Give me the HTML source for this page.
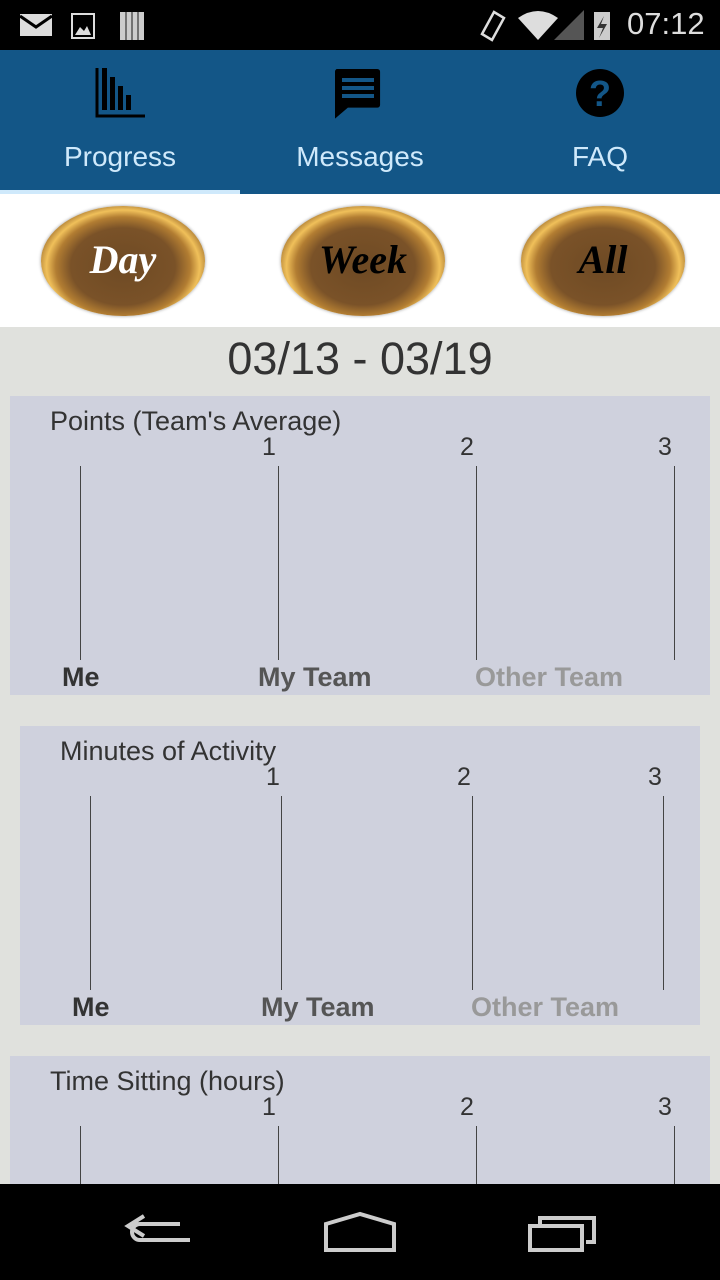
<!DOCTYPE html>
<html><head><style>
body{margin:0;width:720px;height:1280px;overflow:hidden;background:#e0e1dd;font-family:"Liberation Sans",sans-serif;position:relative}
.a{position:absolute}
.sb{left:0;top:0;width:720px;height:50px;background:#000}
.hd{left:0;top:50px;width:720px;height:144px;background:#135687}
.tab{color:#cfe9fb;font-size:28px;width:240px;text-align:center}
.btns{left:0;top:194px;width:720px;height:133px;background:#fff}
.bt{width:164px;height:110px;border-radius:50%;top:206px;background:radial-gradient(ellipse at 50% 55%,#6e4a24 0%,#7a5228 45%,#b27d32 58%,#f0c05a 66%,#8a5a22 78%,#c99040 88%,#5a3a18 100%);box-shadow:0 0 3px #999}
.bt span{position:absolute;left:0;right:0;top:30px;text-align:center;font-family:"Liberation Serif",serif;font-style:italic;font-weight:bold;font-size:40px}
.pn{background:#cfd1dd}
.ln{width:1px;background:#444}
.t{font-size:27px;color:#333}
.n{font-size:25px;color:#333}
.lb{font-size:27px;font-weight:bold}
.nav{left:0;top:1184px;width:720px;height:96px;background:#000}
</style></head><body>
<div class="a sb">
<svg class="a" style="left:20px;top:12px" width="130" height="28"><rect x="0" y="2" width="32" height="22" fill="#ddd"/><path d="M0 4 L16 15 L32 4" stroke="#000" stroke-width="3" fill="none"/><rect x="52" y="2" width="22" height="24" fill="none" stroke="#ddd" stroke-width="2"/><path d="M55 23 L60 15 L64 19 L67 14 L71 23Z" fill="#ddd"/><rect x="100" y="0" width="24" height="28" fill="#ccc"/><path d="M106 0v28M112 0v28M118 0v28" stroke="#555" stroke-width="1.5"/></svg>
<svg class="a" style="left:476px;top:8px" width="146" height="34"><path d="M6 26 L18 4 L28 10 L16 32Z" fill="none" stroke="#ddd" stroke-width="2.5"/><path d="M42 10 Q62 -4 82 10 L62 32Z" fill="#ddd"/><path d="M78 32 L108 2 L108 32Z" fill="#555"/><rect x="118" y="4" width="16" height="28" fill="#ccc"/><path d="M128 8 L121 20 L127 20 L123 30 L131 16 L125 16Z" fill="#333"/></svg>
<div class="a" style="left:627px;top:6px;color:#ddd;font-size:31px">07:12</div>
</div>
<div class="a hd">
<svg class="a" style="left:95px;top:18px" width="50" height="50"><path d="M2 0v48h48" stroke="#000" stroke-width="3" fill="none"/><rect x="7" y="0" width="5" height="42"/><rect x="15" y="9" width="5" height="33"/><rect x="23" y="18" width="5" height="24"/><rect x="31" y="27" width="5" height="15"/></svg>
<svg class="a" style="left:335px;top:19px" width="50" height="50"><path d="M4 0h42a3 3 0 0 1 3 3v36a3 3 0 0 1-3 3H14L0 54V3a3 3 0 0 1 4-3Z" fill="#000" transform="scale(0.92)"/><rect x="7" y="9" width="32" height="4" fill="#135687"/><rect x="7" y="17" width="32" height="4" fill="#135687"/><rect x="7" y="25" width="32" height="4" fill="#135687"/></svg>
<svg class="a" style="left:576px;top:19px" width="50" height="50"><circle cx="24" cy="24" r="24"/><text x="24" y="37" text-anchor="middle" font-family="Liberation Sans" font-weight="bold" font-size="36" fill="#135687">?</text></svg>
<div class="a tab" style="left:0;top:91px">Progress</div>
<div class="a tab" style="left:240px;top:91px">Messages</div>
<div class="a tab" style="left:480px;top:91px">FAQ</div>
<div class="a" style="left:0;top:140px;width:240px;height:4px;background:#cfe9fb"></div>
</div>
<div class="a btns"></div>
<div class="a bt" style="left:41px"><span style="color:#fff">Day</span></div>
<div class="a bt" style="left:281px"><span style="color:#000">Week</span></div>
<div class="a bt" style="left:521px"><span style="color:#000">All</span></div>
<div class="a" style="left:0;top:333px;width:720px;text-align:center;font-size:45px;color:#333">03/13 - 03/19</div>

<div class="a pn" style="left:10px;top:396px;width:700px;height:299px"></div>
<div class="a t" style="left:50px;top:406px">Points (Team's Average)</div>
<div class="a n" style="left:262px;top:433px">1</div><div class="a n" style="left:460px;top:433px">2</div><div class="a n" style="left:658px;top:433px">3</div>
<div class="a ln" style="left:80px;top:466px;height:194px"></div><div class="a ln" style="left:278px;top:466px;height:194px"></div><div class="a ln" style="left:476px;top:466px;height:194px"></div><div class="a ln" style="left:674px;top:466px;height:194px"></div>
<div class="a lb" style="left:62px;top:662px;color:#333">Me</div><div class="a lb" style="left:258px;top:662px;color:#555">My Team</div><div class="a lb" style="left:475px;top:662px;color:#999">Other Team</div>

<div class="a pn" style="left:20px;top:726px;width:680px;height:299px"></div>
<div class="a t" style="left:60px;top:736px">Minutes of Activity</div>
<div class="a n" style="left:266px;top:763px">1</div><div class="a n" style="left:457px;top:763px">2</div><div class="a n" style="left:648px;top:763px">3</div>
<div class="a ln" style="left:90px;top:796px;height:194px"></div><div class="a ln" style="left:281px;top:796px;height:194px"></div><div class="a ln" style="left:472px;top:796px;height:194px"></div><div class="a ln" style="left:663px;top:796px;height:194px"></div>
<div class="a lb" style="left:72px;top:992px;color:#333">Me</div><div class="a lb" style="left:261px;top:992px;color:#555">My Team</div><div class="a lb" style="left:471px;top:992px;color:#999">Other Team</div>

<div class="a pn" style="left:10px;top:1056px;width:700px;height:128px"></div>
<div class="a t" style="left:50px;top:1066px">Time Sitting (hours)</div>
<div class="a n" style="left:262px;top:1093px">1</div><div class="a n" style="left:460px;top:1093px">2</div><div class="a n" style="left:658px;top:1093px">3</div>
<div class="a ln" style="left:80px;top:1126px;height:58px"></div><div class="a ln" style="left:278px;top:1126px;height:58px"></div><div class="a ln" style="left:476px;top:1126px;height:58px"></div><div class="a ln" style="left:674px;top:1126px;height:58px"></div>

<div class="a nav">
<svg class="a" style="left:120px;top:26px" width="480" height="44"><path d="M70 26H20a8 8 0 0 1 0-16h40M24 2 L8 12 L24 22" fill="none" stroke="#ccc" stroke-width="4" transform="translate(0,4)"/><path d="M206 14 L240 4 L274 14 V40 H206Z" fill="none" stroke="#ccc" stroke-width="4"/><rect x="410" y="16" width="52" height="24" fill="none" stroke="#ccc" stroke-width="4"/><path d="M420 14V8h54v24h-8" fill="none" stroke="#ccc" stroke-width="4"/></svg>
</div>
</body></html>
